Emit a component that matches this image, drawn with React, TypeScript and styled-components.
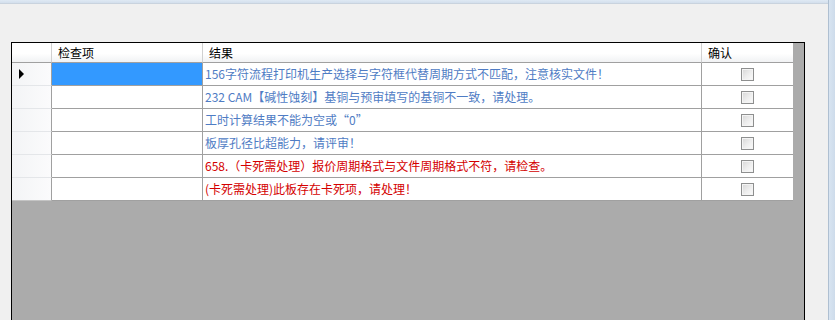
import React, { ReactElement } from "react";
import styled, { createGlobalStyle } from "styled-components";

type Tone = "info" | "error";

interface CheckRow {
  item: string;
  result: string;
  tone: Tone;
  current?: boolean;
}

const rows: CheckRow[] = [
  { item: "", result: "156字符流程打印机生产选择与字符框代替周期方式不匹配，注意核实文件！", tone: "info", current: true },
  { item: "", result: "232 CAM【碱性蚀刻】基铜与预审填写的基铜不一致，请处理。", tone: "info" },
  { item: "", result: "工时计算结果不能为空或“0”", tone: "info" },
  { item: "", result: "板厚孔径比超能力，请评审！", tone: "info" },
  { item: "", result: "658.（卡死需处理）报价周期格式与文件周期格式不符，请检查。", tone: "error" },
  { item: "", result: "(卡死需处理)此板存在卡死项，请处理！", tone: "error" },
];

const COLUMNS = "40px 151px 499px 91px";

export default function App(): ReactElement {
  return (
    <>
      <GlobalStyle />
      <SWindow>
        <SMain>
          <STopEdge />
          <SBody>
            <SGridView>
              <SHeaderRow>
                <SHeaderCell />
                <SHeaderCell>检查项</SHeaderCell>
                <SHeaderCell>结果</SHeaderCell>
                <SHeaderCell>确认</SHeaderCell>
              </SHeaderRow>
              {rows.map((row, i) => (
                <SRow key={i}>
                  <SRowHeader $last={i === rows.length - 1}>
                    {row.current && <SCurrentArrow />}
                  </SRowHeader>
                  <SCell $selected={row.current}>{row.item}</SCell>
                  <SCell $tone={row.tone}>{row.result}</SCell>
                  <SCheckCell>
                    <SCheckBox />
                  </SCheckCell>
                </SRow>
              ))}
            </SGridView>
          </SBody>
        </SMain>
        <SRightEdge />
      </SWindow>
    </>
  );
}

const GlobalStyle = createGlobalStyle`
  html, body {
    margin: 0;
    padding: 0;
    background: #f0f0f0;
  }
  body {
    font-family: "Noto Sans CJK SC", "Noto Sans", sans-serif;
    font-size: 12px;
  }
`;

const SWindow = styled.div`
  display: flex;
  width: 835px;
  height: 320px;
  overflow: hidden;
  background: #f0f0f0;
`;

const SMain = styled.div`
  flex: 1;
  display: flex;
  flex-direction: column;
  min-width: 0;
`;

const STopEdge = styled.div`
  flex: none;
  height: 3px;
  background: linear-gradient(to bottom, #dfe9f4, #d3dfec);
  border-bottom: 1px solid #c9d3de;
`;

const SBody = styled.div`
  flex: 1;
  min-height: 0;
  overflow: hidden;
  padding: 38px 0 0 11px;
`;

const SRightEdge = styled.div`
  width: 6px;
  border-left: 1px solid #aebfd1;
  background: linear-gradient(to right, #d8e4f1, #cddbea);
`;

const SGridView = styled.div`
  width: 794px;
  height: 300px;
  box-sizing: border-box;
  border: 1px solid #000;
  background: #ababab;
`;

const SHeaderRow = styled.div`
  display: grid;
  grid-template-columns: ${COLUMNS};
  width: 781px;
  height: 20px;
`;

const SHeaderCell = styled.div`
  box-sizing: border-box;
  padding-left: 6px;
  border-right: 1px solid #d0d0d0;
  border-bottom: 1px solid #a0a0a0;
  background: linear-gradient(to bottom, #ffffff 0%, #ffffff 55%, #f1f2f4 100%);
  color: #000;
  font-size: 12px;
  line-height: 19px;
  white-space: nowrap;
  &:last-child {
    border-right: none;
  }
`;

const SRow = styled.div`
  display: grid;
  grid-template-columns: ${COLUMNS};
  width: 781px;
  height: 23px;
`;

const SRowHeader = styled.div<{ $last?: boolean }>`
  box-sizing: border-box;
  display: flex;
  align-items: center;
  padding-left: 7px;
  border-right: 1px solid #a0a0a0;
  border-bottom: 1px solid ${({ $last }) => ($last ? "#c4c4c4" : "#e4e6e9")};
  background: linear-gradient(to right, #f3f4f6, #fbfbfc);
`;

const SCurrentArrow = styled.span`
  width: 0;
  height: 0;
  border-top: 5px solid transparent;
  border-bottom: 5px solid transparent;
  border-left: 5px solid #000;
`;

const SCell = styled.div<{ $selected?: boolean; $tone?: Tone }>`
  box-sizing: border-box;
  padding-left: 2px;
  border-right: 1px solid #a0a0a0;
  border-bottom: 1px solid #a0a0a0;
  background: ${({ $selected }) => ($selected ? "#3399ff" : "#ffffff")};
  color: ${({ $tone }) => ($tone === "error" ? "#d40000" : "#4f7cc4")};
  font-size: 12px;
  line-height: 22px;
  white-space: nowrap;
  overflow: hidden;
`;

const SCheckCell = styled.div`
  box-sizing: border-box;
  display: flex;
  align-items: center;
  justify-content: center;
  border-bottom: 1px solid #a0a0a0;
  background: #fff;
`;

const SCheckBox = styled.span`
  width: 13px;
  height: 13px;
  box-sizing: border-box;
  border: 1px solid #8e8f8f;
  background: linear-gradient(135deg, #d6d6d6 0%, #eeeeee 55%, #fbfbfb 100%);
  box-shadow: inset 0 0 0 1px #f4f4f4;
`;
